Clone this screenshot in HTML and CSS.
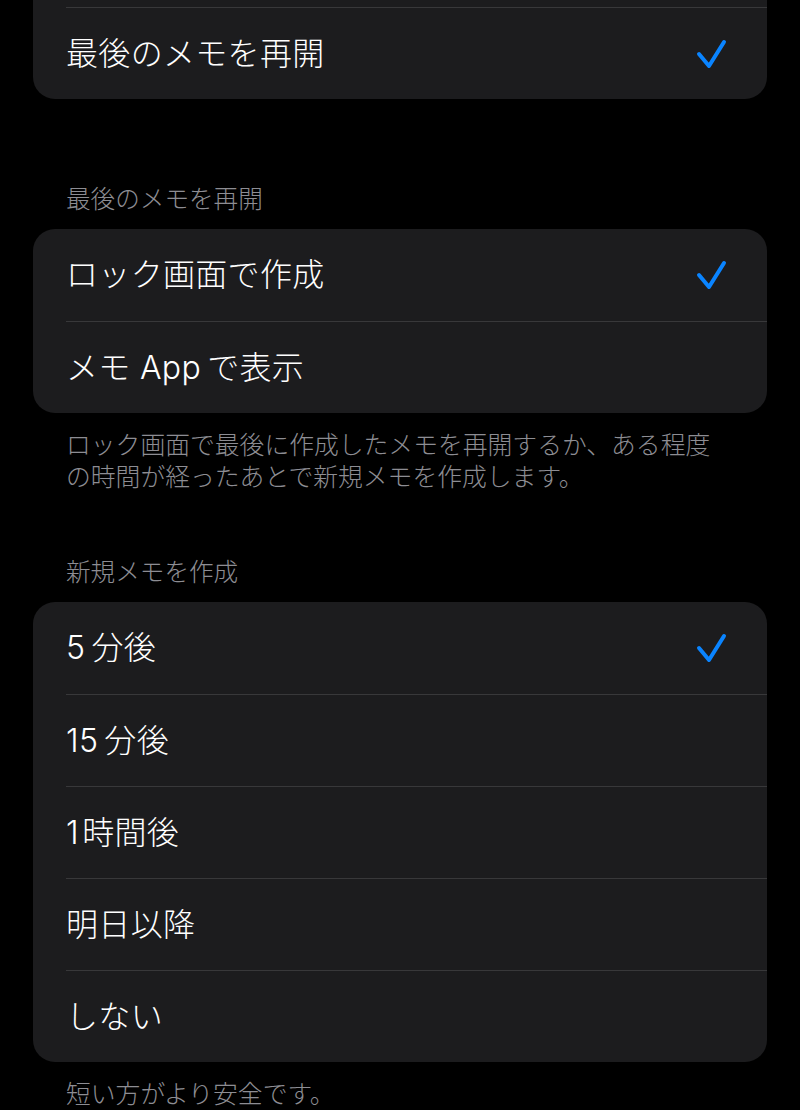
FILE: index.html
```html
<!DOCTYPE html>
<html lang="ja">
<head>
    <meta charset="UTF-8">
    <meta name="viewport" content="width=device-width, initial-scale=1.0">
    <title>メモ設定</title>
    <link rel="stylesheet" href="styles.css">
</head>
<body>
    <div class="page">
        <!-- Grupo anterior, cortado por arriba -->
        <div class="card card-cut">
            <div class="row divided">
                <span class="label">最後のメモを再開</span>
                <svg class="check" viewBox="0 0 32 32"><path d="M4 16 L14 28 L29 4"/></svg>
            </div>
        </div>

        <div class="section-title">最後のメモを再開</div>
        <div class="card">
            <div class="row">
                <span class="label">ロック画面で作成</span>
                <svg class="check" viewBox="0 0 32 32"><path d="M4 16 L14 28 L29 4"/></svg>
            </div>
            <div class="row divided">
                <span class="label">メモ App&thinsp;で表示</span>
            </div>
        </div>
        <div class="section-footer">ロック画面で最後に作成したメモを再開するか、ある程度<br>の時間が経ったあとで新規メモを作成します。</div>

        <div class="section-title title-gap">新規メモを作成</div>
        <div class="card">
            <div class="row">
                <span class="label">5&thinsp;分後</span>
                <svg class="check" viewBox="0 0 32 32"><path d="M4 16 L14 28 L29 4"/></svg>
            </div>
            <div class="row divided"><span class="label">15&thinsp;分後</span></div>
            <div class="row divided"><span class="label">1&#8202;時間後</span></div>
            <div class="row divided"><span class="label">明日以降</span></div>
            <div class="row divided"><span class="label">しない</span></div>
        </div>
        <div class="section-footer">短い方がより安全です。</div>
    </div>
</body>
</html>
```

FILE: styles.css
```css
body {
    margin: 0;
    background: #000;
    color: #fff;
    font-family: Inter, "Noto Sans CJK JP", sans-serif;
    font-weight: 300;
    -webkit-font-smoothing: antialiased;
}
.page {
    padding-bottom: 40px;
}
.card {
    margin: 0 33px;
    background: #1c1c1e;
    border-radius: 22px;
    overflow: hidden;
}
.card-cut {
    border-top-left-radius: 0;
    border-top-right-radius: 0;
    padding-top: 7px;
}
.row {
    display: flex;
    align-items: center;
    justify-content: space-between;
    height: 92px;
    margin-left: 33px;
    padding-right: 40px;
    box-sizing: border-box;
}
.row.divided { border-top: 1px solid #38383a; }
.label {
    font-size: 32px;
    line-height: 40px;
    letter-spacing: 0.01em;
}
.check {
    width: 32px;
    height: 32px;
    fill: none;
    stroke: #0a84ff;
    stroke-width: 4;
    stroke-linecap: round;
    stroke-linejoin: round;
}
.section-title {
    margin: 85px 66px 15px;
    font-size: 24.6px;
    line-height: 30px;
    color: #8d8d93;
}
.title-gap { margin-top: 64px; }
.section-footer {
    margin: 16px 66px 0;
    font-size: 24.8px;
    line-height: 32px;
    color: #8d8d93;
}
```
